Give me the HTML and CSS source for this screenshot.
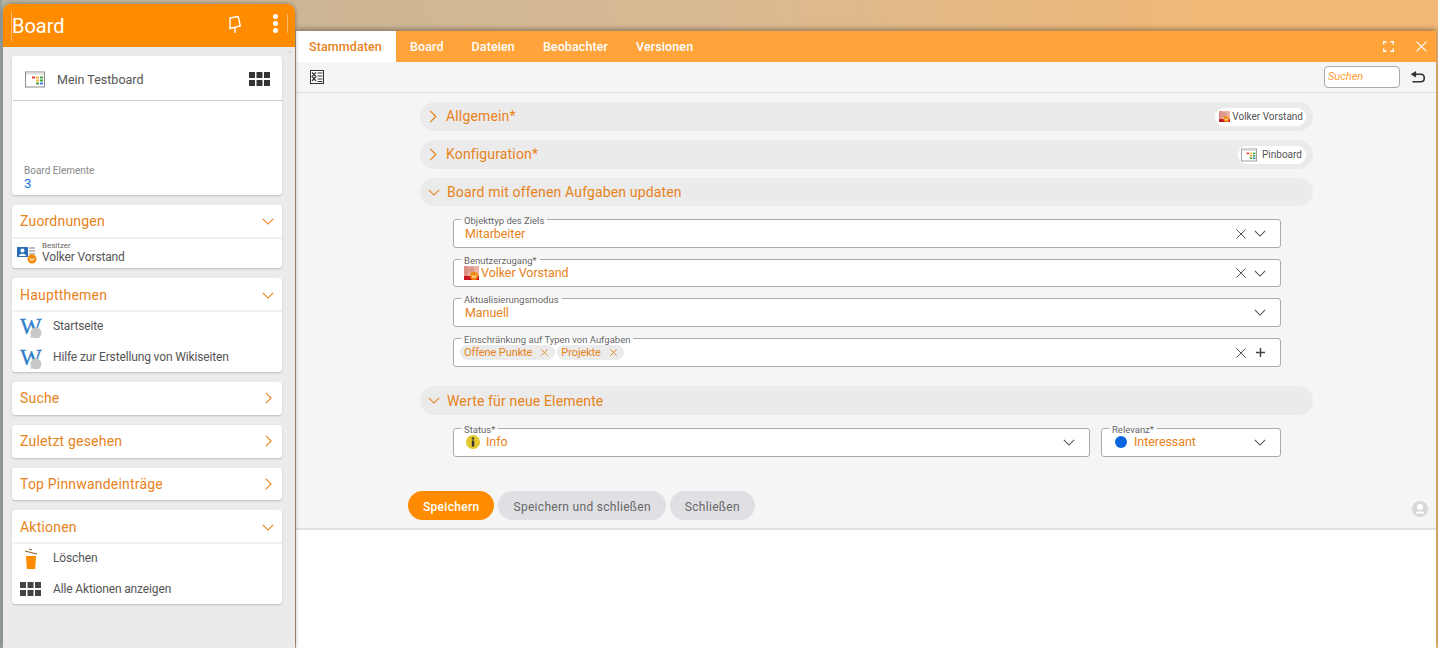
FILE: index.html
```html
<!DOCTYPE html>
<html>
<head>
    <title>Board</title>
    <link rel="stylesheet" href="styles.css">
</head>
<body>
<svg class="defs" width="0" height="0">
    <defs>
        <symbol id="ic-board" viewBox="0 0 20 16">
            <rect x="0.5" y="0.5" width="19" height="15" fill="#fff" stroke="#8a8a8a"/>
            <rect x="1" y="1" width="18" height="2" fill="#ddd"/>
            <rect x="7" y="5" width="3" height="2" fill="#e53935"/>
            <rect x="11" y="5" width="3" height="2" fill="#f9b233"/>
            <rect x="15" y="5" width="3" height="2" fill="#43a047"/>
            <rect x="11" y="8" width="3" height="2" fill="#f9b233"/>
            <rect x="15" y="8" width="3" height="2" fill="#43a047"/>
            <rect x="11" y="11" width="3" height="2" fill="#43a047"/>
            <rect x="15" y="11" width="3" height="2" fill="#4a7de0"/>
        </symbol>
        <symbol id="ic-grid" viewBox="0 0 21 14">
            <path d="M0 0h6v6H0zM7.500 0h6v6h-6zM15 0h6v6h-6zM0 8h6v6H0zM7.500 8h6v6h-6zM15 8h6v6h-6z" fill="currentColor"/>
        </symbol>
        <symbol id="ic-wiki" viewBox="0 0 22 24">
            <text x="0" y="20" font-family="Liberation Serif" font-size="23" fill="#2f80c8" stroke="#2f80c8" stroke-width=".3">W</text>
            <circle cx="16" cy="19" r="5.500" fill="#c8c8c8"/>
            <path d="M10 24l2-5 4 3z" fill="#c8c8c8"/>
        </symbol>
        <symbol id="ic-down" viewBox="0 0 14 8">
            <path d="M1 1l6 6 6-6" fill="none" stroke="currentColor" stroke-width="1.300"/>
        </symbol>
        <symbol id="ic-right" viewBox="0 0 8 14">
            <path d="M1 1l6 6-6 6" fill="none" stroke="currentColor" stroke-width="1.300"/>
        </symbol>
        <symbol id="ic-x" viewBox="0 0 10 10">
            <path d="M.5.500l9 9M9.500.500l-9 9" fill="none" stroke="currentColor"/>
        </symbol>
        <symbol id="ic-photo" viewBox="0 0 15 15">
            <rect width="15" height="15" fill="#eab5a5"/>
            <rect y="11" width="15" height="4" fill="#c8141c"/>
            <rect x="0" y="0" width="4" height="11" fill="#dd8f86"/>
            <circle cx="7" cy="5" r="3.500" fill="#d99a88"/>
            <circle cx="10" cy="11" r="4" fill="#f58a0b"/>
            <path d="M8 10l1 2.500 1-1.500 1 1.500 1-2.500" fill="none" stroke="#fff" stroke-width=".7"/>
        </symbol>
    </defs>
</svg>

<div class="page">
    <aside class="sidebar">
        <header class="side-head">
            <span class="side-title">Board</span>
            <svg class="pin" width="12" height="17" viewBox="0 0 12 17">
                <path d="M1 2l8.300-1.500L11.300 10 1 12.500zM6 12v5" fill="none" stroke="#fff" stroke-width="1.400"/>
            </svg>
            <span class="dots"><i></i><i></i><i></i></span>
        </header>
        <i class="scroll-up"></i>

        <div class="side-body">
            <section class="card">
                <div class="board-row">
                    <svg class="board-icon"><use href="#ic-board"/></svg>
                    <span class="board-name">Mein Testboard</span>
                    <svg class="board-grid"><use href="#ic-grid"/></svg>
                </div>
                <div class="board-info">
                    <div class="info-label">Board Elemente</div>
                    <div class="info-value">3</div>
                </div>
            </section>

            <section class="card">
                <div class="card-head open">Zuordnungen <svg class="chev-d"><use href="#ic-down"/></svg></div>
                <div class="owner">
                    <svg class="owner-icon" width="21" height="20" viewBox="0 0 21 20">
                        <rect x="0" y="3" width="11" height="10" fill="#2a6db5"/>
                        <circle cx="5.500" cy="6.500" r="2" fill="#fff"/>
                        <path d="M2 12c0-3 7-3 7 0z" fill="#fff"/>
                        <path d="M12 3h6v2h-6zM12 6h6v2h-6zM12 9h6v2h-6z" fill="#bdbdbd"/>
                        <circle cx="15" cy="15" r="4.500" fill="#f58a0b"/>
                        <path d="M13 14l1 2.500 1-1.500 1 1.500 1-2.500" fill="none" stroke="#fff" stroke-width=".8"/>
                    </svg>
                    <div class="owner-text">
                        <div class="owner-label">Besitzer</div>
                        <div class="owner-name">Volker Vorstand</div>
                    </div>
                </div>
            </section>

            <section class="card">
                <div class="card-head open lower">Hauptthemen <svg class="chev-d"><use href="#ic-down"/></svg></div>
                <div class="link-row first"><svg class="wiki"><use href="#ic-wiki"/></svg>Startseite</div>
                <div class="link-row"><svg class="wiki"><use href="#ic-wiki"/></svg>Hilfe zur Erstellung von Wikiseiten</div>
            </section>

            <section class="card">
                <div class="card-head higher">Suche <svg class="chev-r"><use href="#ic-right"/></svg></div>
            </section>
            <section class="card">
                <div class="card-head higher">Zuletzt gesehen <svg class="chev-r"><use href="#ic-right"/></svg></div>
            </section>
            <section class="card">
                <div class="card-head short">Top Pinnwandeinträge <svg class="chev-r"><use href="#ic-right"/></svg></div>
            </section>

            <section class="card">
                <div class="card-head open lower">Aktionen <svg class="chev-d"><use href="#ic-down"/></svg></div>
                <div class="link-row first">
                    <svg class="wiki" viewBox="0 0 22 24">
                        <path d="M6 10h10l-.8 13H6.800z" fill="#ff8c00"/>
                        <path d="M5 5l12 3M9 3l3 1" fill="none" stroke="#8a5a2a" stroke-width="1"/>
                    </svg>Löschen
                </div>
                <div class="link-row"><svg class="grid-dark"><use href="#ic-grid"/></svg>Alle Aktionen anzeigen</div>
            </section>
        </div>
    </aside>

    <main class="window">
        <nav class="tabs">
            <a class="tab active">Stammdaten</a>
            <a class="tab">Board</a>
            <a class="tab">Dateien</a>
            <a class="tab">Beobachter</a>
            <a class="tab">Versionen</a>
            <span class="tab-tools">
                <svg width="11" height="11" viewBox="0 0 11 11">
                    <path d="M.7 3.500V.7h2.800M7.500.7h2.800v2.800M10.300 7.500v2.800H7.500M3.500 10.300H.7V7.500" fill="none" stroke="#fff" stroke-width="1.400"/>
                </svg>
                <svg class="tab-close"><use href="#ic-x"/></svg>
            </span>
        </nav>

        <div class="toolbar">
            <svg width="14" height="14" viewBox="0 0 14 14">
                <rect x=".5" y=".5" width="13" height="13" fill="#fff" stroke="#333"/>
                <path d="M2 2.500l4 4-4 4.500M6 2.500l-4 4 4 4.500M7.500 3h5M7.500 6h5M7.500 9h5M7.500 11.500h5" fill="none" stroke="#333" stroke-width="1.200"/>
            </svg>
            <span class="search">Suchen</span>
            <svg class="back" width="16" height="13" viewBox="0 0 16 14">
                <path d="M6 0v7L0 3.500z" fill="#333"/>
                <path d="M5 3.500h6c5 0 5 8 0 8H2" fill="none" stroke="#333" stroke-width="1.700"/>
            </svg>
        </div>

        <div class="content">
            <div class="section-bar">
                <svg class="sec-r"><use href="#ic-right"/></svg>
                <span class="sec-title">Allgemein*</span>
                <span class="bar-chip"><svg class="chip-photo"><use href="#ic-photo"/></svg>Volker Vorstand</span>
            </div>
            <div class="section-bar">
                <svg class="sec-r"><use href="#ic-right"/></svg>
                <span class="sec-title">Konfiguration*</span>
                <span class="bar-chip wide"><svg class="chip-board"><use href="#ic-board"/></svg>Pinboard</span>
            </div>
            <div class="section-bar slim">
                <svg class="sec-d"><use href="#ic-down"/></svg>
                <span class="sec-title">Board mit offenen Aufgaben updaten</span>
            </div>

            <div class="fields">
                <div class="field">
                    <span class="legend">Objekttyp des Ziels</span>
                    <span class="value">Mitarbeiter</span>
                    <svg class="clear"><use href="#ic-x"/></svg>
                    <svg class="drop"><use href="#ic-down"/></svg>
                </div>
                <div class="field slim">
                    <span class="legend">Benutzerzugang*</span>
                    <span class="value tight"><svg class="val-photo"><use href="#ic-photo"/></svg>Volker Vorstand</span>
                    <svg class="clear"><use href="#ic-x"/></svg>
                    <svg class="drop"><use href="#ic-down"/></svg>
                </div>
                <div class="field">
                    <span class="legend">Aktualisierungsmodus</span>
                    <span class="value">Manuell</span>
                    <svg class="drop"><use href="#ic-down"/></svg>
                </div>
                <div class="field tags">
                    <span class="legend">Einschränkung auf Typen von Aufgaben</span>
                    <span class="value">
                        <span class="tag">Offene Punkte <svg class="tag-x"><use href="#ic-x"/></svg></span>
                        <span class="tag">Projekte <svg class="tag-x"><use href="#ic-x"/></svg></span>
                    </span>
                    <svg class="clear"><use href="#ic-x"/></svg>
                    <svg class="plus" width="9" height="9" viewBox="0 0 11 11"><path d="M5.500 0v11M0 5.500h11" stroke="#444" stroke-width="1.800"/></svg>
                </div>
            </div>

            <div class="section-bar second">
                <svg class="sec-d"><use href="#ic-down"/></svg>
                <span class="sec-title">Werte für neue Elemente</span>
            </div>

            <div class="fields-row">
                <div class="field grow">
                    <span class="legend">Status*</span>
                    <span class="value info">
                        <svg width="14" height="14" viewBox="0 0 14 14">
                            <circle cx="7" cy="7" r="7" fill="#e3c92f"/>
                            <path d="M5.800 2.500h2.400v2H5.800zM5.800 5.500h2.400v6H5.800z" fill="#333"/>
                        </svg>Info
                    </span>
                    <svg class="drop"><use href="#ic-down"/></svg>
                </div>
                <div class="field relevance">
                    <span class="legend">Relevanz*</span>
                    <span class="value info"><i class="blue-dot"></i>Interessant</span>
                    <svg class="drop"><use href="#ic-down"/></svg>
                </div>
            </div>

            <div class="buttons">
                <button class="btn primary">Speichern</button>
                <button class="btn">Speichern und schließen</button>
                <button class="btn">Schließen</button>
                <svg class="user" width="16" height="16" viewBox="0 0 16 16">
                    <circle cx="8" cy="8" r="8" fill="#d8d8d8"/>
                    <circle cx="8" cy="6" r="3" fill="#fff"/>
                    <path d="M3.500 12.500c0-3 9-3 9 0z" fill="#fff"/>
                </svg>
            </div>
        </div>
        <div class="blank"></div>
    </main>
</div>
</body>
</html>
```

FILE: styles.css
```css
html, body { margin: 0; height: 100%; overflow: hidden; }
body { font-family: Roboto, "Liberation Sans", sans-serif; color: #555; }
.defs { position: absolute; }
svg { display: block; flex: none; }

.page {
    display: flex;
    height: 648px;
    padding-left: 3px;
    padding-right: 2px;
    box-sizing: border-box;
    background: linear-gradient(90deg, #8a9aa0 0, #b8b4a0 3px, #cdb694 300px, #d8b993 700px, #efb877 1200px, #f2b878 100%);
}

/* sidebar */
.sidebar {
    width: 292px;
    margin-top: 4px;
    background: #ebebeb;
    border-radius: 8px 8px 0 0;
    box-shadow: 0 0 4px rgba(0,0,0,.4);
    position: relative;
    z-index: 2;
}
.side-head {
    height: 43px;
    background: #ff8c00;
    border-radius: 8px 8px 0 0;
    display: flex;
    align-items: center;
    color: #fff;
    padding: 0 7px 0 8px;
}
.side-title {
    font-size: 20px;
    flex: 1;
    line-height: 31px;
    margin-top: 2px;
    border-left: 1px solid rgba(255,255,255,.4);
}
.pin { margin-right: 32px; margin-top: -2px; }
.dots {
    display: flex;
    flex-direction: column;
    gap: 2px;
    padding-right: 9px;
    border-right: 1px solid rgba(255,255,255,.4);
    margin-top: -4px;
}
.dots i { width: 5px; height: 5px; border-radius: 50%; background: #fff; }
.scroll-up {
    position: absolute;
    top: 45px;
    right: 2px;
    border: 3px solid transparent;
    border-top: 0;
    border-bottom: 4px solid #ddd;
}

.side-body { padding: 9px 13px 0 9px; display: flex; flex-direction: column; gap: 10px; }
.card {
    background: #fff;
    border-radius: 3px;
    box-shadow: 0 1px 2px rgba(0,0,0,.2);
}
.board-row {
    height: 45px;
    box-sizing: border-box;
    display: flex;
    align-items: center;
    border-bottom: 1px solid #ccc;
    margin-left: 1px;
    padding: 2px 12px 0;
    font-size: 12.500px;
}
.board-icon { width: 20px; height: 17px; margin-right: 12px; }
.board-name { flex: 1; }
.board-grid { width: 21px; height: 14px; color: #333; }
.board-info { height: 94px; box-sizing: border-box; padding-top: 63px; padding-left: 12px; }
.info-label { font-size: 10px; color: #888; line-height: 13px; }
.info-value { font-size: 13px; color: #1a73e8; line-height: 14px; }

.card-head {
    height: 33px;
    box-sizing: border-box;
    display: flex;
    align-items: center;
    justify-content: space-between;
    padding: 0 8px 0 8px;
    font-size: 14px;
    letter-spacing: .2px;
    color: #e8821a;
}
.card-head.short { height: 32px; }
.card-head.higher { padding-bottom: 2px; }
.card-head.open { height: 34px; border-bottom: 2px solid #eef0f3; margin-left: 1px; padding-left: 7px; }
.card-head.lower { padding-top: 2px; }
.chev-d { width: 12px; height: 7px; color: #e8821a; }
.chev-r { width: 7px; height: 12px; color: #e8821a; margin-right: 2px; }

.owner { height: 29px; display: flex; align-items: center; padding-left: 5px; gap: 4px; }
.owner-text { margin-top: -2px; }
.owner-label { font-size: 8px; line-height: 9px; color: #666; }
.owner-name { font-size: 12px; line-height: 14px; letter-spacing: -.14px; }

.link-row {
    height: 31px;
    display: flex;
    align-items: center;
    padding-left: 8px;
    font-size: 12px;
    letter-spacing: -.14px;
    color: #555;
}
.link-row.first { height: 27px; padding-bottom: 2px; }
.wiki { width: 22px; height: 24px; margin-right: 11px; }
.grid-dark { width: 21px; height: 14px; margin-right: 12px; color: #444; }

/* main window */
.window {
    flex: 1;
    margin-top: 31px;
    margin-left: 1px;
    background: #fff;
    display: flex;
    flex-direction: column;
    min-width: 0;
    box-shadow: 0 -2px 5px rgba(0,0,0,.35);
}
.tabs {
    height: 31px;
    background: #ffa33a;
    display: flex;
    align-items: stretch;
    font-size: 12.500px;
    font-weight: 500;
    color: #fff;
    letter-spacing: .1px;
}
.tab { display: flex; align-items: center; padding: 0 14px; }
.tab.active { background: #fff; color: #e8821a; padding: 0 13px; width: 100px; box-sizing: border-box; }
.tab-tools { margin-left: auto; display: flex; align-items: center; gap: 22px; padding-right: 9px; }
.tab-close { width: 11px; height: 11px; color: #fff; }

.toolbar {
    height: 31px;
    box-sizing: border-box;
    background: #f5f5f5;
    border-bottom: 1px solid #ddd;
    display: flex;
    align-items: center;
    padding: 0 10px 0 14px;
}
.search {
    margin-left: auto;
    width: 76px;
    height: 22px;
    box-sizing: border-box;
    background: #fff;
    border: 1px solid #aaa;
    border-radius: 4px;
    padding-left: 3px;
    font-size: 11px;
    line-height: 20px;
    font-style: italic;
    color: #ff9d33;
    margin-right: 10px;
}

.content {
    height: 437px;
    box-sizing: border-box;
    background: #f5f5f5;
    border-bottom: 2px solid #e2e2e2;
    padding: 9px 123px 0 124px;
}
.section-bar {
    height: 29px;
    background: #ebebeb;
    border-radius: 15px;
    margin-bottom: 9px;
    display: flex;
    align-items: center;
    padding: 0 7px 0 9px;
    color: #e8821a;
}
.section-bar.slim { height: 28px; }
.section-bar.second { margin-top: 19px; margin-bottom: 13px; }
.sec-r { width: 8px; height: 13px; margin-right: 9px; }
.sec-d { width: 12px; height: 7px; margin-left: -1px; margin-right: 7px; }
.sec-title { font-size: 14px; letter-spacing: .15px; flex: 1; margin-top: -2px; }
.slim .sec-title, .second .sec-title { margin-top: 0; }
.bar-chip {
    display: flex;
    align-items: center;
    background: #fff;
    border-radius: 9px;
    height: 18px;
    padding: 0 3px 0 4px;
    font-size: 10px;
    color: #555;
}
.bar-chip.wide { padding: 0 4px 0 3px; }
.chip-photo { width: 11px; height: 11px; margin-right: 2px; }
.chip-board { width: 16px; height: 14px; margin-right: 5px; }

.fields { margin: 13px 32px 0 33px; display: flex; flex-direction: column; gap: 11px; }
.fields-row { margin: 0 32px 0 33px; display: flex; gap: 11px; }
.field {
    position: relative;
    height: 29px;
    box-sizing: border-box;
    background: #fff;
    border: 1px solid #aaa;
    border-radius: 3px;
    display: flex;
    align-items: center;
    padding: 0 14px 0 11px;
    gap: 8px;
}
.field.slim { height: 28px; }
.field.grow { flex: 1; }
.field.relevance { width: 180px; }
.field.tags { padding-left: 6px; }
.legend {
    position: absolute;
    top: -5px;
    left: 7px;
    padding: 0 3px;
    font-size: 9.500px;
    line-height: 11px;
    background: linear-gradient(#f5f5f5 45%, #fff 45%);
    color: #666;
}
.value {
    flex: 1;
    display: flex;
    align-items: center;
    font-size: 12.500px;
    letter-spacing: -.05px;
    color: #e8821a;
}
.value.tight { margin-left: -1px; margin-top: -2px; }
.value.info { padding-left: 1px; gap: 6px; margin-top: -2px; }
.val-photo { width: 15px; height: 15px; margin-right: 2px; }
.blue-dot { width: 12px; height: 12px; border-radius: 50%; background: #0a66dc; margin: 0 1px; }
.clear { width: 10px; height: 10px; color: #555; }
.drop { width: 12px; height: 7px; color: #555; }
.plus { margin-left: 2px; margin-right: 1px; }
.tag {
    display: flex;
    align-items: center;
    background: #ebebeb;
    border-radius: 8px;
    height: 15px;
    padding: 0 7px 0 4px;
    font-size: 11px;
    letter-spacing: -.1px;
    margin-right: 2px;
}
.tag-x { width: 7px; height: 7px; margin-left: 9px; color: #e8821a; stroke-width: 1.300; }

.buttons {
    margin: 34px -115px 0 -12px;
    display: flex;
    align-items: flex-start;
    gap: 4px;
}
.btn {
    height: 29px;
    border: 0;
    border-radius: 15px;
    background: #e0e0e4;
    color: #666;
    font-family: Roboto, sans-serif;
    font-size: 12px;
    letter-spacing: .3px;
    padding: 2px 15px 0;
}
.btn.primary { background: #ff8c00; color: #fff; font-weight: 500; }
.user { margin-left: auto; margin-top: 10px; }
.blank { flex: 1; background: #fff; }
```
